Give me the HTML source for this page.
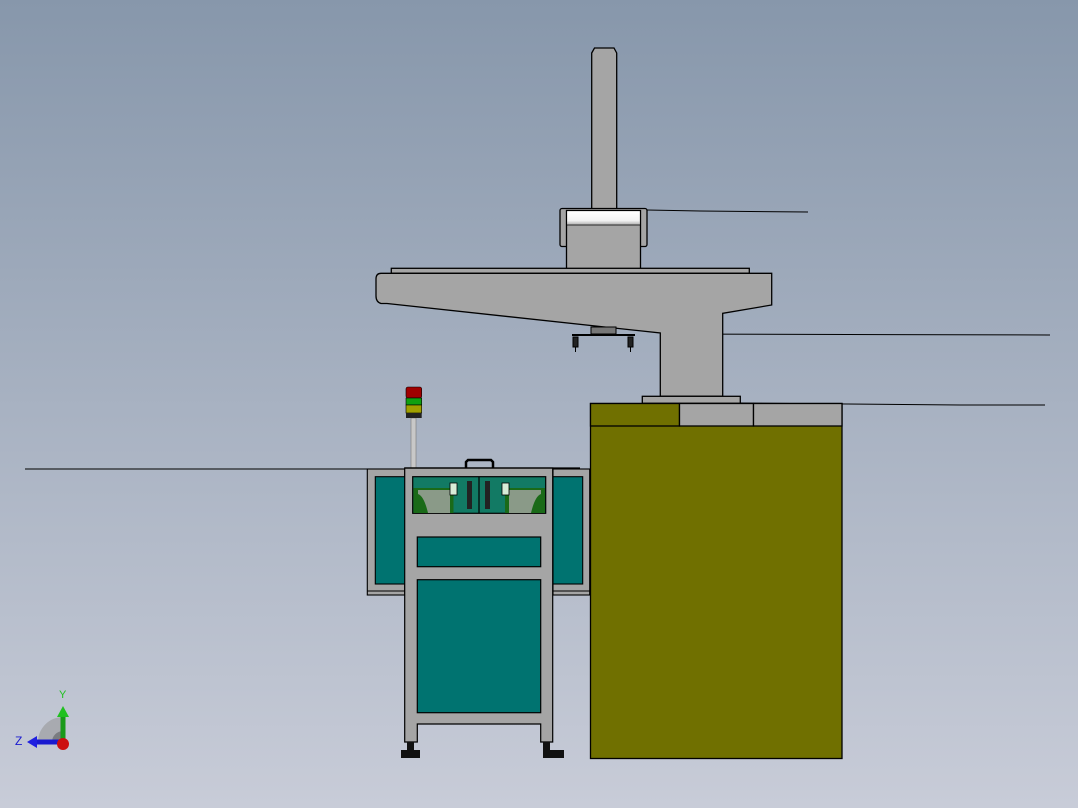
<!DOCTYPE html>
<html><head><meta charset="utf-8"><style>
html,body{margin:0;padding:0;width:1078px;height:808px;overflow:hidden}
svg{display:block}
</style></head><body>
<svg width="1078" height="808" viewBox="0 0 1078 808" xmlns="http://www.w3.org/2000/svg">
<defs>
<linearGradient id="bg" x1="0" y1="0" x2="0" y2="1">
<stop offset="0" stop-color="#8797ab"/>
<stop offset="1" stop-color="#c8ccd8"/>
</linearGradient>
<linearGradient id="wh" x1="0" y1="0" x2="0" y2="1">
<stop offset="0" stop-color="#ffffff"/><stop offset="0.7" stop-color="#f2f2f2"/><stop offset="1" stop-color="#b0b0b0"/>
</linearGradient>
</defs>
<rect width="1078" height="808" fill="url(#bg)"/>
<g stroke="#000" stroke-width="1" fill="none">
<polyline points="647,210 700,211 808,212"/>
<line x1="660" y1="334" x2="1050" y2="335"/>
<polyline points="740,403 960,405 1045,405"/>
<line x1="25" y1="469" x2="370" y2="469"/>
</g>
<g stroke="#000" stroke-width="1.3" fill="#a5a5a5">
<!-- robot -->
<path d="M591.7,53 L594.5,48 L614,48 L616.7,53 L616.7,211 L591.7,211 Z"/>
<rect x="560" y="208.5" width="87" height="38" rx="2"/>
<rect x="566.5" y="210.5" width="74" height="61"/>
<rect x="391.3" y="268.3" width="358" height="5"/>
<path d="M381,273.3 L771.7,273.3 L771.7,305 L722.7,313.3 L722.7,396.3 L660.3,396.3 L660.3,333 L387,303.5 L381,303.5 Q376,302 376,296 L376,279 Q376,273.3 381,273.3 Z"/>
<rect x="642.3" y="396.3" width="98" height="7"/>
</g>
<rect x="567.2" y="211.2" width="72.6" height="13.5" fill="url(#wh)"/>
<line x1="566.5" y1="225" x2="640.5" y2="225" stroke="#000" stroke-width="0.8"/>
<!-- gripper -->
<g stroke="#000" stroke-width="1">
<rect x="591" y="327" width="25" height="7" fill="#777"/>
<line x1="572" y1="335" x2="635" y2="335" stroke-width="2"/>
<rect x="573" y="337" width="5" height="10" fill="#222"/>
<rect x="628" y="337" width="5" height="10" fill="#222"/>
<line x1="575.5" y1="347" x2="575.5" y2="352"/>
<line x1="630.5" y1="347" x2="630.5" y2="352"/>
</g>
<!-- olive box -->
<g stroke="#000" stroke-width="1.3">
<rect x="590.5" y="403.5" width="251.5" height="355" fill="#707000"/>
<rect x="590.5" y="403.5" width="89" height="22.5" fill="#707000"/>
<rect x="679.5" y="403.5" width="74" height="22.5" fill="#a5a5a5"/>
<rect x="753.5" y="403.5" width="88.5" height="22.5" fill="#a5a5a5"/>
</g>
<!-- light tower -->
<rect x="411" y="418" width="5" height="50" fill="#c8c8c8" stroke="#777" stroke-width="0.6"/>
<rect x="406" y="387" width="15.7" height="11" rx="2" fill="#a00000" stroke="#000" stroke-width="0.6"/>
<rect x="406" y="398" width="15.7" height="7" fill="#10a010" stroke="#000" stroke-width="0.6"/>
<rect x="406" y="405" width="15.7" height="8" fill="#a0a000" stroke="#000" stroke-width="0.6"/>
<rect x="406" y="413" width="15.7" height="5" fill="#222"/>
<!-- wings -->
<g stroke="#000" stroke-width="1.1">
<rect x="367.3" y="469" width="37.5" height="126" fill="#a5a5a5"/>
<rect x="375.3" y="476.7" width="30" height="107.3" fill="#007370"/>
<rect x="553" y="469" width="36.7" height="126" fill="#a5a5a5"/>
<rect x="553" y="476.7" width="29.7" height="107.3" fill="#007370"/>
<line x1="367.3" y1="591" x2="405" y2="591"/>
<line x1="553" y1="591" x2="589.7" y2="591"/>
</g>
<!-- handle -->
<path d="M466,468 L466,462 L468,460 L491,460 L493,462 L493,468" fill="none" stroke="#000" stroke-width="2.5"/>
<!-- main frame -->
<g stroke="#000" stroke-width="1.2">
<path d="M404.7,468 L552.7,468 L552.7,742 L540.7,742 L540.7,724 L417.3,724 L417.3,742 L404.7,742 Z" fill="#a5a5a5"/>
<rect x="412.7" y="476.7" width="133" height="36.6" fill="#127a64"/>
<rect x="417.3" y="537" width="123.4" height="29.7" fill="#007370"/>
<rect x="417.3" y="579.7" width="123.4" height="133" fill="#007370"/>
</g>
<line x1="404.7" y1="468" x2="580" y2="468" stroke="#000" stroke-width="1.2"/>
<!-- window internals -->
<rect x="413.5" y="488" width="40" height="25" fill="#1a6a18"/>
<rect x="505" y="488" width="40" height="25" fill="#1a6a18"/>
<path d="M418,490 L450,490 L450,513 L428,513 Q424,496 418,494 Z" fill="#8a9a88"/>
<path d="M541,490 L509,490 L509,513 L531,513 Q535,496 541,494 Z" fill="#8a9a88"/>
<rect x="450" y="483" width="7" height="12" fill="#d8ecd8" stroke="#000" stroke-width="0.8"/>
<rect x="502" y="483" width="7" height="12" fill="#d8ecd8" stroke="#000" stroke-width="0.8"/>
<rect x="467" y="481" width="5" height="28" fill="#222"/>
<rect x="485" y="481" width="5" height="28" fill="#222"/>
<line x1="479" y1="477" x2="479" y2="513" stroke="#000" stroke-width="1.2"/>
<!-- feet -->
<g fill="#111">
<rect x="407" y="742" width="7" height="8"/>
<rect x="401" y="750" width="19" height="8"/>
<rect x="543" y="742" width="7" height="8"/>
<rect x="543" y="750" width="21" height="8"/>
</g>
<!-- axis triad -->
<path d="M38,742 A25,25 0 0 1 63,717 L63,742 Z" fill="#a8aab0"/>
<path d="M52,742 A11,11 0 0 1 63,731 L63,742 Z" fill="#7a7c80"/>
<rect x="60.5" y="716" width="5" height="26" fill="#1a9a1a"/>
<path d="M57,717 L63,706 L69,717 Z" fill="#20c020"/>
<rect x="36" y="739.5" width="27" height="5" fill="#1a1ad0"/>
<path d="M37,736 L27,742 L37,748 Z" fill="#2020e0"/>
<circle cx="63" cy="744" r="6" fill="#cc1010"/>
<text x="59" y="698" font-family="Liberation Sans, sans-serif" font-size="11" fill="#20c020">Y</text>
<text x="15" y="745" font-family="Liberation Sans, sans-serif" font-size="12" fill="#1a1ad0">Z</text>
</svg>
</body></html>
